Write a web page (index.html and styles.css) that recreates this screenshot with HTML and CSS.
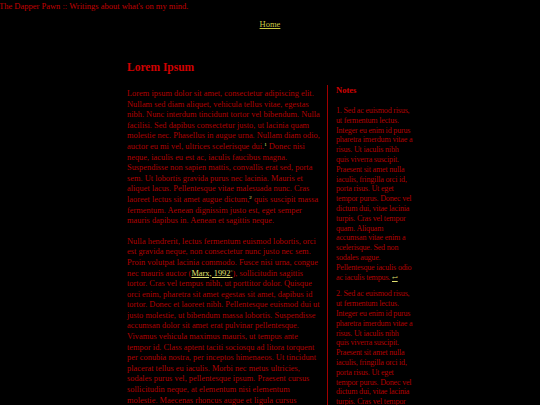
FILE: index.html
```html
<!DOCTYPE html>
<html>
<head>
<meta charset="utf-8">
<link rel="stylesheet" href="styles.css">
</head>
<body>
<header class="site-header">
  <div class="site-title">The Dapper Pawn :: Writings about what's on my mind.</div>
  <nav class="nav"><a href="#" class="nav-link">Home</a></nav>
</header>
<div class="page">
  <main class="main">
    <h1 class="title">Lorem Ipsum</h1>
    <p>Lorem ipsum dolor sit amet, consectetur adipiscing elit. Nullam sed diam aliquet, vehicula tellus vitae, egestas nibh. Nunc interdum tincidunt tortor vel bibendum. Nulla facilisi. Sed dapibus consectetur justo, ut lacinia quam molestie nec. Phasellus in augue urna. Nullam diam odio, auctor eu mi vel, ultrices scelerisque dui.<sup class="fn">1</sup> Donec nisi neque, iaculis eu est ac, iaculis faucibus magna. Suspendisse non sapien mattis, convallis erat sed, porta sem. Ut lobortis gravida purus nec lacinia. Mauris et aliquet lacus. Pellentesque vitae malesuada nunc. Cras laoreet lectus sit amet augue dictum,<sup class="fn">2</sup> quis suscipit massa fermentum. Aenean dignissim justo est, eget semper mauris dapibus in. Aenean et sagittis neque.</p>
    <p>Nulla hendrerit, lectus fermentum euismod lobortis, orci est gravida neque, non consectetur nunc justo nec sem. Proin volutpat lacinia commodo. Fusce nisi urna, congue nec mauris auctor (<a href="#" class="cite">Marx, 1992<sup class="fn">°</sup></a>), sollicitudin sagittis tortor. Cras vel tempus nibh, ut porttitor dolor. Quisque orci enim, pharetra sit amet egestas sit amet, dapibus id tortor. Donec et laoreet nibh. Pellentesque euismod dui ut justo molestie, ut bibendum massa lobortis. Suspendisse accumsan dolor sit amet erat pulvinar pellentesque. Vivamus vehicula maximus mauris, ut tempus ante tempor id. Class aptent taciti sociosqu ad litora torquent per conubia nostra, per inceptos himenaeos. Ut tincidunt placerat tellus eu iaculis. Morbi nec metus ultricies, sodales purus vel, pellentesque ipsum. Praesent cursus sollicitudin neque, at elementum nisi elementum molestie. Maecenas rhoncus augue et ligula cursus convallis.</p>
  </main>
  <aside class="notes">
    <h2 class="notes-title">Notes</h2>
    <p>1. Sed ac euismod risus, ut fermentum lectus. Integer eu enim id purus pharetra imerdum vitae a risus. Ut iaculis nibh quis viverra suscipit. Praesent sit amet nulla iaculis, fringilla orci id, porta risus. Ut eget tempor purus. Donec vel dictum dui, vitae lacinia turpis. Cras vel tempor quam. Aliquam accumsan vitae enim a scelerisque. Sed non sodales augue. Pellentesque iaculis odio ac iaculis tempus. <a href="#" class="back">↩</a></p>
    <p>2. Sed ac euismod risus, ut fermentum lectus. Integer eu enim id purus pharetra imerdum vitae a risus. Ut iaculis nibh quis viverra suscipit. Praesent sit amet nulla iaculis, fringilla orci id, porta risus. Ut eget tempor purus. Donec vel dictum dui, vitae lacinia turpis. Cras vel tempor quam. Aliquam accumsan vitae enim a scelerisque. Sed non sodales augue. Pellentesque iaculis odio ac iaculis tempus. <a href="#" class="back">↩</a></p>
  </aside>
</div>
</body>
</html>
```
FILE: styles.css
```css
html, body {
  margin: 0;
  padding: 0;
  background: #000;
}
body {
  font-family: "Liberation Serif", "DejaVu Serif", serif;
  font-size: 8.4px;
  line-height: 10.6px;
  color: #b00000;
}
.site-header {
  padding-top: 1px;
}
.site-title {
  color: #c00000;
  font-size: 8.5px;
  line-height: 10px;
  margin-left: -1px;
}
.nav {
  text-align: center;
  margin-top: 8px;
  line-height: 10px;
}
.nav-link {
  color: #c8c840;
  font-size: 8.5px;
}
.page {
  width: 286px;
  margin: 0 auto;
  display: flex;
  gap: 7px;
  padding-top: 30px;
}
.main {
  width: 193px;
  flex: none;
}
.title {
  color: #d00000;
  font-size: 11.5px;
  line-height: 14px;
  margin: 0 0 15px 0;
}
.main p {
  margin: 0 0 10px 0;
}
.fn {
  font-size: 5px;
  line-height: 5px;
  color: #e8e870;
  vertical-align: 3px;
}
.cite {
  color: #e0e070;
}
.notes {
  flex: 1;
  min-width: 0;
  border-left: 1px solid #a00000;
  padding-left: 8px;
  margin-top: 25px;
  font-size: 8.1px;
  line-height: 9.8px;
  letter-spacing: -0.2px;
}
.notes-title {
  color: #d00000;
  font-size: 8.5px;
  line-height: 10px;
  letter-spacing: 0;
  margin: 0 0 11px 0;
}
.notes p {
  margin: 0 0 6px 0;
}
.back {
  color: #e0e070;
  font-size: 7px;
}
```
